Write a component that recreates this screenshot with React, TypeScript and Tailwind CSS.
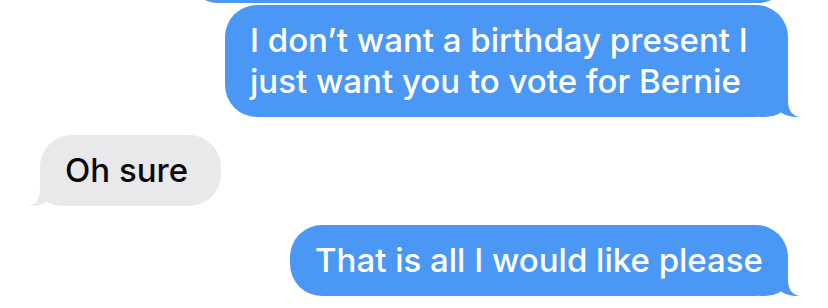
import React from 'react';

type Side = 'me' | 'them';

function Tail({ side }: { side: Side }) {
  const fill = side === 'me' ? '#4b97f6' : '#e9e9eb';
  return (
    <svg
      className={
        side === 'me'
          ? 'absolute bottom-0 right-[-12px]'
          : 'absolute bottom-0 left-[-12px] -scale-x-100'
      }
      width="40"
      height="30"
      viewBox="0 0 40 30"
    >
      <path
        d="M28 0 L28 14 C28 24 33 29 40 30 C33 30.5 25 28.5 21 25.5 C16 29 9 30 0 30 L0 0 Z"
        fill={fill}
      />
    </svg>
  );
}

function Bubble({
  side,
  width,
  children,
}: {
  side: Side;
  width: string;
  children: React.ReactNode;
}) {
  const mine = side === 'me';
  return (
    <div
      className={`relative ${width} ${
        mine ? 'self-end bg-[#4b97f6] text-white' : 'self-start bg-[#e9e9eb] text-[#0a0a0a]'
      } rounded-[32px] px-[25px] py-[15px] text-[33px] font-medium leading-[41px] whitespace-nowrap`}
    >
      <span className="relative z-10">{children}</span>
      <Tail side={side} />
    </div>
  );
}

export default function App() {
  return (
    <div
      className="w-[828px] h-[308px] bg-white overflow-hidden flex flex-col px-[40px]"
      style={{ fontFamily: 'Inter, "Noto Sans", sans-serif' }}
    >
      {/* tail end of the previous message */}
      <div className="self-end h-[3px] overflow-hidden flex items-end">
        <div className="w-[600px] h-[60px] shrink-0 rounded-[30px] bg-[#4b97f6]" />
      </div>

      <div className="mt-[2px] flex flex-col">
        <Bubble side="me" width="w-[563px]">
          I don’t want a birthday present I
          <br />
          just want you to vote for Bernie
        </Bubble>
      </div>

      <div className="mt-[18px] flex flex-col">
        <Bubble side="them" width="w-[181px]">
          Oh sure
        </Bubble>
      </div>

      <div className="mt-[19px] flex flex-col">
        <Bubble side="me" width="w-[498px]">
          That is all I would like please
        </Bubble>
      </div>
    </div>
  );
}
